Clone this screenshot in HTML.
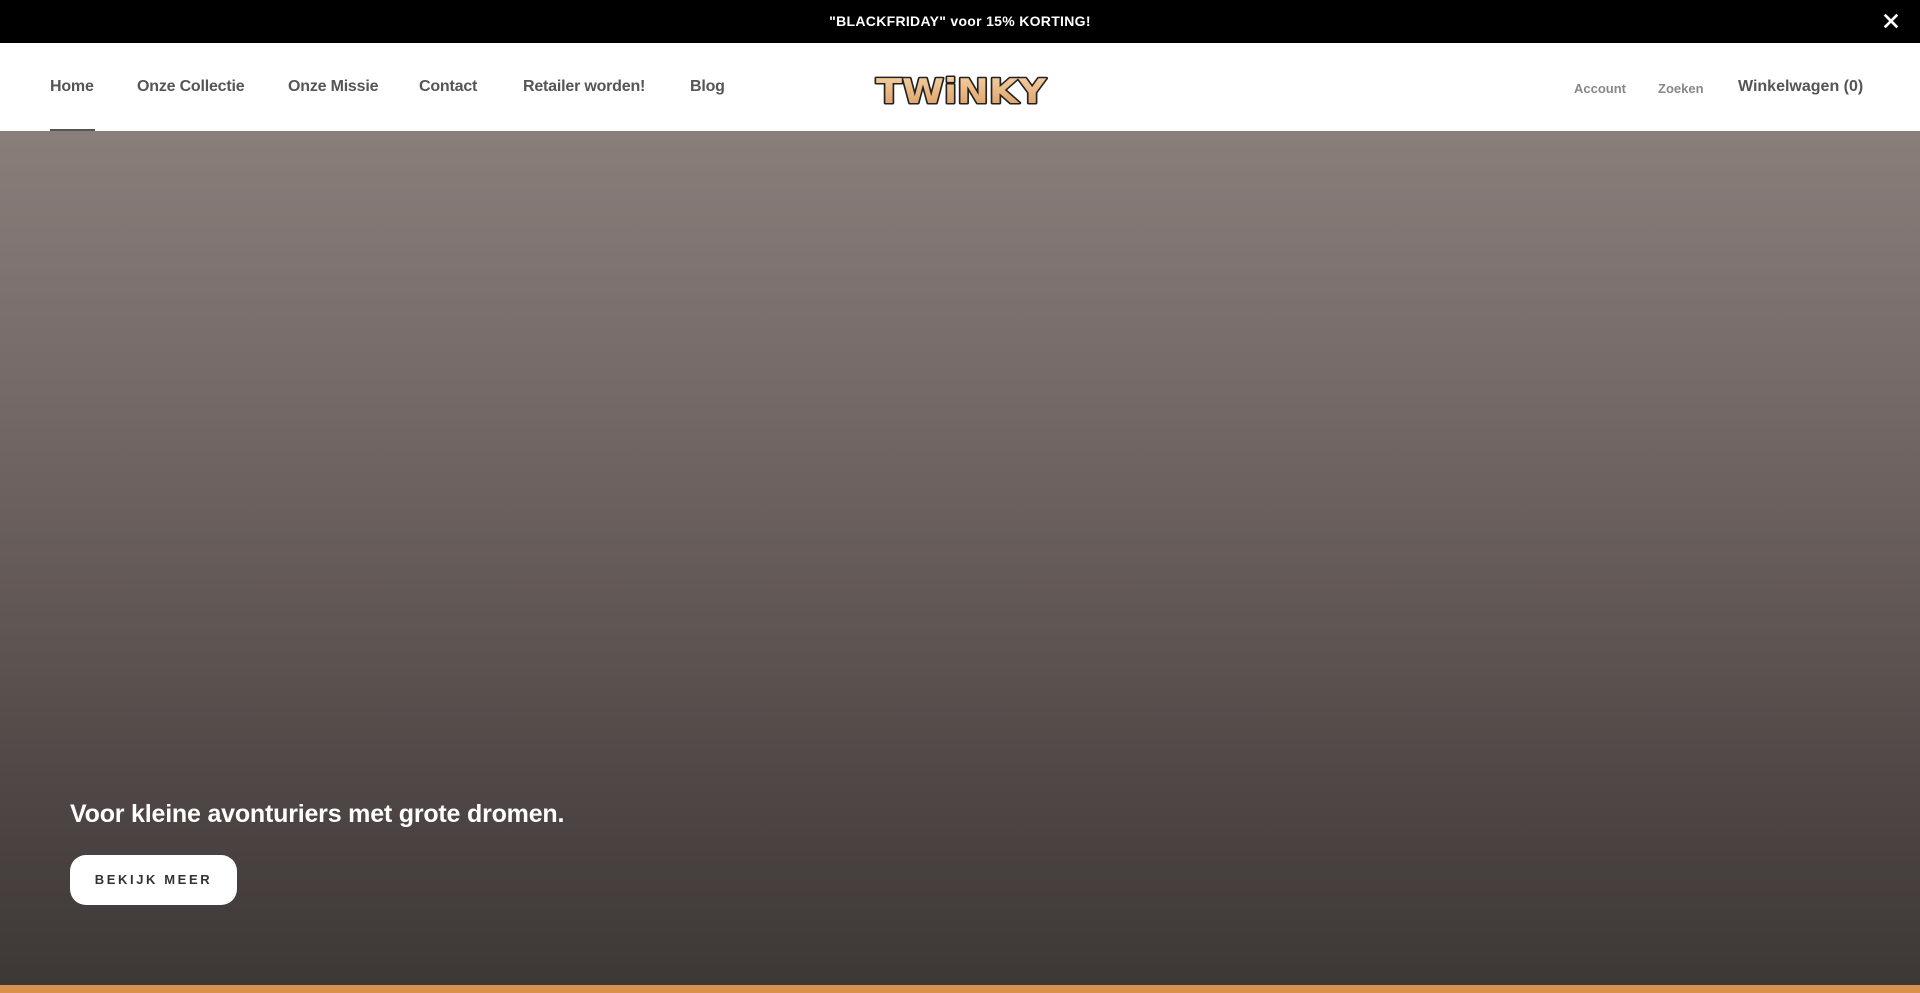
<!DOCTYPE html>
<html><head><meta charset="utf-8"><style>
*{margin:0;padding:0;box-sizing:border-box}
body{width:1920px;height:993px;overflow:hidden;font-family:"Liberation Sans",sans-serif;background:#fff;position:relative}
.top{position:absolute;left:0;top:0;width:1920px;height:43px;background:#000;color:#fff;font-weight:bold;font-size:14px;text-align:center;line-height:43px;letter-spacing:.3px}
.x{position:absolute;right:20px;top:12px;width:18px;height:18px}
.hdr{position:absolute;top:43px;left:0;width:1920px;height:88px;background:#fff}
.nav a{position:absolute;top:35px;font-size:16px;color:#555;font-weight:bold;text-decoration:none;letter-spacing:-.2px}
.ul{position:absolute;left:50px;top:86px;width:45px;height:2px;background:#555}
.r{position:absolute;top:38px;font-size:13px;color:#888;font-weight:bold}
.hero{position:absolute;top:131px;left:0;width:1920px;height:854px;background:linear-gradient(#8a7e7b 0%,#756a68 30%,#5e5452 60%,#48413f 85%,#3d3836 100%)}
.h1{position:absolute;left:70px;top:800px;color:#fff;font-size:25px;font-weight:bold;letter-spacing:-.2px}
.btn{position:absolute;left:70px;top:855px;width:167px;height:50px;background:#fff;border-radius:16px;font-size:13px;font-weight:bold;letter-spacing:2.6px;color:#333;text-align:center;line-height:50px}
.or{position:absolute;top:985px;left:0;width:1920px;height:8px;background:#d9914f}
</style></head><body>
<div class="top">"BLACKFRIDAY" voor 15% KORTING!
<svg class="x" viewBox="0 0 20 20"><path d="M3 3L17 17M17 3L3 17" stroke="#fff" stroke-width="3"/></svg></div>
<div class="hdr">
<div class="nav">
<a style="left:50px">Home</a><a style="left:137px">Onze Collectie</a><a style="left:288px">Onze Missie</a><a style="left:419px">Contact</a><a style="left:523px">Retailer worden!</a><a style="left:690px">Blog</a>
</div>
<div class="ul"></div>
<svg style="position:absolute;left:872px;top:28px" width="178" height="40" viewBox="0 0 178 40">
<defs><linearGradient id="g" x1="0" y1="0" x2="0" y2="1"><stop offset="0" stop-color="#f7d3a8"/><stop offset="1" stop-color="#d99a5c"/></linearGradient></defs>
<text x="89" y="32" text-anchor="middle" textLength="170" lengthAdjust="spacingAndGlyphs" font-family="DejaVu Sans" font-weight="bold" font-size="34" fill="url(#g)" stroke="#222" stroke-width="3" stroke-linejoin="round" paint-order="stroke">TWiNKY</text>
</svg>
<span class="r" style="left:1574px">Account</span>
<span class="r" style="left:1658px">Zoeken</span>
<span class="r" style="left:1738px;top:35px;font-size:16px;color:#555">Winkelwagen (0)</span>
</div>
<div class="hero"></div>
<div class="h1">Voor kleine avonturiers met grote dromen.</div>
<div class="btn">BEKIJK MEER</div>
<div class="or"></div>
</body></html>
